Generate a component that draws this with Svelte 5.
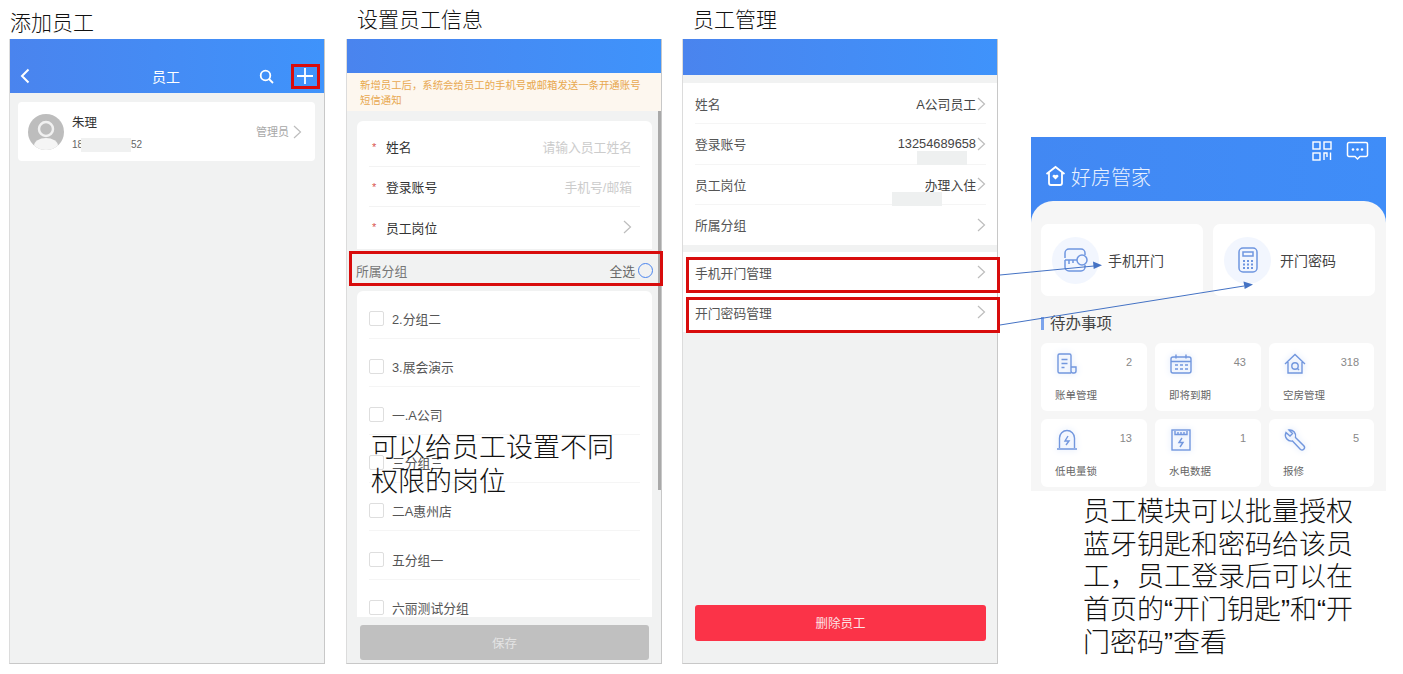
<script>
  const formRows = [
    { label: "姓名", hint: "请输入员工姓名" },
    { label: "登录账号", hint: "手机号/邮箱" },
    { label: "员工岗位", arrow: true }
  ];
  const groups = ["2.分组二", "3.展会演示", "一.A公司", "三分组三", "二A惠州店", "五分组一", "六丽测试分组"];
  const infoRows = [
    { label: "姓名", value: "A公司员工" },
    { label: "登录账号", value: "13254689658" },
    { label: "员工岗位", value: "办理入住" },
    { label: "所属分组", value: "" }
  ];
  const todos = [
    { name: "账单管理", count: 2, icon: "bill" },
    { name: "即将到期", count: 43, icon: "calendar" },
    { name: "空房管理", count: 318, icon: "house" },
    { name: "低电量锁", count: 13, icon: "lock" },
    { name: "水电数据", count: 1, icon: "meter" },
    { name: "报修", count: 5, icon: "wrench" }
  ];
</script>

{#snippet chevron()}
  <svg class="chevron" width="9" height="14" viewBox="0 0 9 14" fill="none">
    <path d="M1 1l6.5 6L1 13" stroke="#bdbdbd" stroke-width="1.2" />
  </svg>
{/snippet}

{#snippet todoIcon(name)}
  <svg class="todo-icon" width="24" height="24" viewBox="0 0 24 24" fill="none" stroke="#7297de" stroke-width="1.4">
    {#if name === "bill"}
      <path d="M16 21H4.500A1.500 1.500 0 0 1 3 19.500V3.500A1.500 1.500 0 0 1 4.500 2h10A1.500 1.500 0 0 1 16 3.500V19a2 2 0 0 0 2 2h1a2 2 0 0 0 2-2v-4h-5" />
      <path d="M6.500 7.500h6M6.500 11.500h6M6.500 15.500h3" />
    {:else if name === "calendar"}
      <rect x="2" y="5" width="20" height="16" rx="2" />
      <path d="M7 2.500v4M17 2.500v4M2 9.500h20M6 13h3M11 13h3M16 13h3M6 17h3M11 17h3M16 17h3" />
    {:else if name === "house"}
      <path d="M2 12l10-9.500L22 12M5 10v11h14V10" />
      <circle cx="12" cy="14" r="3.200" />
      <path d="M14.500 16.500l1.500 1.500" />
    {:else if name === "lock"}
      <path d="M4.500 20V10a7.500 7.500 0 0 1 15 0v10M2 21h20" />
      <path d="M13 8l-3 5h4l-3 4" />
    {:else if name === "meter"}
      <rect x="3" y="2" width="18" height="20" />
      <path d="M6 3v3.500h12V3M9 4v2M12 4v2M15 4v2M13 10l-3 4.500h4L11 19" />
    {:else}
      <path d="M3 4.500l4 3.500 2.500-2.500L6 2a6 6 0 0 1 6.500 7.500l8.500 8.500a2.500 2.500 0 0 1-3.500 3.500L9.500 13A6 6 0 0 1 3 4.500z" />
    {/if}
  </svg>
{/snippet}

<div class="slide">
  <section class="col">
    <h2>添加员工</h2>
    <div class="phone">
      <header class="bar list-bar">
        <svg width="10" height="16" viewBox="0 0 10 16" fill="none"><path d="M8.500 1.500L2 8l6.500 6.500" stroke="#fff" stroke-width="2" /></svg>
        <span class="bar-title">员工</span>
        <svg class="search" width="15" height="15" viewBox="0 0 15 15" fill="none"><circle cx="6.500" cy="6.500" r="4.800" stroke="#fff" stroke-width="1.800" /><path d="M10 10l4 4" stroke="#fff" stroke-width="1.800" /></svg>
        <svg class="plus" width="16" height="16" viewBox="0 0 16 16"><path d="M8 0v16M0 8h16" stroke="#fff" stroke-width="1.800" /></svg>
      </header>
      <div class="staff-card">
        <svg width="36" height="36" viewBox="0 0 36 36">
          <defs><clipPath id="avatar"><circle cx="18" cy="18" r="18" /></clipPath></defs>
          <circle cx="18" cy="18" r="18" fill="#bdbdbd" />
          <g clip-path="url(#avatar)">
            <circle cx="18" cy="15" r="7" fill="none" stroke="#f1f1f1" stroke-width="2.500" />
            <ellipse cx="18" cy="32" rx="12" ry="8" fill="#f5f5f5" />
          </g>
        </svg>
        <div class="staff-info">
          <div class="staff-name">朱理</div>
          <div class="staff-phone"><span class="phone-head">18</span><span class="mask"></span>52</div>
        </div>
        <span class="staff-role">管理员</span>
        {@render chevron()}
      </div>
    </div>
  </section>

  <section class="col">
    <h2 class="indent">设置员工信息</h2>
    <div class="phone">
      <header class="bar short-bar"></header>
      <p class="notice">新增员工后，系统会给员工的手机号或邮箱发送一条开通账号短信通知</p>
      <div class="form-body">
        <div class="scrollbar"></div>
        <div class="form-card">
          {#each formRows as row, i}
            <div class="form-row" class:last={i === formRows.length - 1}>
              <span class="star">*</span>
              <span class="form-label">{row.label}</span>
              {#if row.hint}<span class="hint">{row.hint}</span>{/if}
              {#if row.arrow}{@render chevron()}{/if}
            </div>
          {/each}
        </div>
        <div class="section-row">
          <span>所属分组</span>
          <span class="select-all">全选<i class="radio"></i></span>
        </div>
        <div class="group-card">
          {#each groups as group}
            <div class="group-row">
              <i class="check"></i>
              <span>{group}</span>
            </div>
          {/each}
        </div>
      </div>
      <div class="form-foot"><div class="save">保存</div></div>
    </div>
  </section>

  <section class="col manage-col">
    <h2 class="indent">员工管理</h2>
    <div class="phone">
      <header class="bar detail-bar"></header>
      <div class="info-list">
        {#each infoRows as row, i}
          <div class="info-row" class:last={i === infoRows.length - 1}>
            <span>{row.label}</span>
            <span class="info-value">{row.value}</span>
            {@render chevron()}
            {#if i === 1}<i class="cover cover-a"></i>{/if}
            {#if i === 2}<i class="cover cover-b"></i>{/if}
          </div>
        {/each}
      </div>
      <div class="info-list action-list">
        <div class="info-row last"><span>手机开门管理</span><span class="info-value"></span>{@render chevron()}</div>
        <div class="info-row last"><span>开门密码管理</span><span class="info-value"></span>{@render chevron()}</div>
      </div>
      <div class="delete-wrap"><div class="delete">删除员工</div></div>
    </div>
  </section>

  <section class="col home-col">
    <div class="home">
      <div class="home-icons">
        <svg width="20" height="20" viewBox="0 0 20 20" fill="none" stroke="#fff" stroke-width="1.400">
          <rect x="1" y="1" width="7" height="7" /><rect x="12" y="1" width="7" height="7" /><rect x="1" y="12" width="7" height="7" />
          <path d="M12 19v-7h3v4M18.500 11.500V19" />
        </svg>
        <svg width="23" height="20" viewBox="0 0 23 20" fill="none">
          <path d="M3 1.500h17A1.500 1.500 0 0 1 21.500 3v11a1.500 1.500 0 0 1-1.500 1.500h-6L11.500 18 9 15.500H3A1.500 1.500 0 0 1 1.500 14V3A1.500 1.500 0 0 1 3 1.500z" stroke="#fff" stroke-width="1.500" />
          <circle cx="7" cy="8.500" r="1.300" fill="#fff" /><circle cx="11.500" cy="8.500" r="1.300" fill="#fff" /><circle cx="16" cy="8.500" r="1.300" fill="#fff" />
        </svg>
      </div>
      <div class="brand">
        <svg width="21" height="22" viewBox="0 0 21 22" fill="none">
          <path d="M1.500 9L10.500 2l9 7M4 7.500V18a2 2 0 0 0 2 2h9a2 2 0 0 0 2-2V7.500" stroke="#fff" stroke-width="1.800" />
          <path d="M10.500 14.500l-3-3a1.700 1.700 0 0 1 3-1.200 1.700 1.700 0 0 1 3 1.200z" fill="#fff" />
        </svg>
        <span>好房管家</span>
      </div>
      <div class="sheet">
        <div class="door-cards">
          <div class="door-card">
            <span class="door-icon">
              <svg width="26" height="24" viewBox="0 0 26 24" fill="none" stroke="#6f96e0" stroke-width="1.500">
                <path d="M2 10V5a4 4 0 0 1 4-4h12a4 4 0 0 1 4 4v2M2 12h12M2 12v7a4 4 0 0 0 4 4h12a4 4 0 0 0 4-4v-2" />
                <circle cx="19" cy="12" r="5" />
                <path d="M6 12v4M10 12v3" />
              </svg>
            </span>
            <span>手机开门</span>
          </div>
          <div class="door-card">
            <span class="door-icon">
              <svg width="20" height="26" viewBox="0 0 20 26" fill="none" stroke="#6f96e0" stroke-width="1.500">
                <rect x="1" y="1" width="18" height="24" rx="4" />
                <rect x="5" y="5" width="10" height="4" />
                <path d="M5 14h2M9 14h2M13 14h2M5 17.500h2M9 17.500h2M13 17.500h2M5 21h2M9 21h2M13 21h2" stroke-width="2" />
              </svg>
            </span>
            <span>开门密码</span>
          </div>
        </div>
        <h3 class="todo-title">待办事项</h3>
        <div class="todo-grid">
          {#each todos as todo}
            <div class="todo">
              <div class="todo-top">
                {@render todoIcon(todo.icon)}
                <span class="todo-count">{todo.count}</span>
              </div>
              <div class="todo-name">{todo.name}</div>
            </div>
          {/each}
        </div>
      </div>
    </div>
    <p class="note note-home">员工模块可以批量授权蓝牙钥匙和密码给该员工，员工登录后可以在首页的“开门钥匙”和“开门密码”查看</p>
  </section>

  <!-- annotations drawn over the screenshots -->
  <div class="mark mark-plus"></div>
  <div class="mark mark-group"></div>
  <div class="mark mark-phone"></div>
  <div class="mark mark-code"></div>
  <p class="note note-form">可以给员工设置不同权限的岗位</p>
  <svg class="arrows" width="1403" height="674" viewBox="0 0 1403 674" fill="none">
    <path d="M1000 275L1094 266" stroke="#4472c4" />
    <path d="M1102 265.200l-9-3.700.7 7.500z" fill="#4472c4" />
    <path d="M1000 325L1244 286" stroke="#4472c4" />
    <path d="M1253 284.500l-9.500-3 1.200 7.500z" fill="#4472c4" />
  </svg>
</div>

<style>
  :global(body) {
    margin: 0;
    background: #fff;
  }

  .slide {
    position: relative;
    display: flex;
    gap: 21px;
    width: 1403px;
    height: 674px;
    padding-left: 9px;
    box-sizing: border-box;
    overflow: hidden;
    font-family: "Liberation Sans", "Noto Sans CJK SC", sans-serif;
    color: #333;
  }

  .col {
    display: flex;
    flex-direction: column;
    width: 316px;
  }

  .manage-col {
    margin-left: -1px;
  }

  h2 {
    height: 39px;
    margin: 0;
    padding: 9px 0 0 1px;
    box-sizing: border-box;
    font-size: 21px;
    line-height: 28px;
    font-weight: 300;
    color: #111;
  }

  h2.indent {
    padding-left: 11px;
    margin-top: -3px;
    height: 42px;
  }

  .phone {
    display: flex;
    flex-direction: column;
    height: 625px;
    box-sizing: border-box;
    background: #f1f2f2;
    border-right: 1px solid #c8c8c8;
    border-bottom: 1px solid #c8c8c8;
    border-left: 1px solid #dcdcdc;
  }

  .bar {
    flex: none;
    background: linear-gradient(90deg, #4a84ee, #3f93fb);
  }

  .list-bar {
    display: flex;
    align-items: center;
    height: 54px;
    padding: 20px 0 0 10px;
    box-sizing: border-box;
    color: #fff;
  }

  .list-bar svg {
    flex: none;
  }

  .bar-title {
    flex: none;
    margin-left: 122px;
    font-size: 14px;
    width: 70px;
  }

  .search {
    margin-left: 37px;
  }

  .plus {
    margin-left: 23px;
  }

  .staff-card {
    display: flex;
    align-items: center;
    margin: 9px 9px 0 8px;
    height: 59px;
    padding: 0 13px 0 10px;
    background: #fff;
    border-radius: 4px;
  }

  .staff-info {
    flex: 1;
    margin: 2px 0 0 8px;
  }

  .staff-name {
    font-size: 12.500px;
    line-height: 18px;
    margin-bottom: 6px;
  }

  .staff-phone {
    display: flex;
    font-size: 10px;
    line-height: 14px;
    color: #666;
  }

  .phone-head {
    width: 9px;
    overflow: hidden;
  }

  .mask {
    width: 50px;
    height: 14px;
    background: #f0f1f1;
  }

  .staff-role {
    margin: -2px 4px 0 0;
    font-size: 11px;
    color: #a8a8a8;
  }

  .short-bar {
    height: 34px;
  }

  .notice {
    flex: none;
    margin: 0;
    padding: 5px 12px 0 13px;
    height: 38px;
    box-sizing: border-box;
    background: #fdf7ef;
    color: #e8a850;
    font-size: 10.400px;
    line-height: 15px;
  }

  .form-body {
    position: relative;
    flex: 1;
    min-height: 0;
    overflow: hidden;
    padding: 10px 9px 0 10px;
  }

  .scrollbar {
    position: absolute;
    top: 0;
    right: 0;
    width: 3px;
    height: 379px;
    background: #a9a9a9;
  }

  .form-card {
    padding: 6px 12px 0;
    height: 128px;
    box-sizing: border-box;
    background: #fff;
    border-radius: 6px 6px 0 0;
  }

  .form-row {
    display: flex;
    align-items: center;
    height: 40px;
    box-sizing: border-box;
    border-bottom: 1px solid #f3f3f3;
    font-size: 12.800px;
  }

  .form-row.last {
    border-bottom: 0;
  }

  .star {
    width: 17px;
    padding-left: 3px;
    box-sizing: border-box;
    color: #d9534f;
    font-size: 11px;
  }

  .form-label {
    flex: 1;
  }

  .hint {
    margin-right: 8px;
    color: #ccc;
  }

  .form-row .chevron {
    margin-right: 8px;
  }

  .section-row {
    display: flex;
    justify-content: space-between;
    align-items: center;
    margin: 0 -1px;
    height: 42px;
    font-size: 12.800px;
    color: #777;
  }

  .select-all {
    display: flex;
    align-items: center;
    gap: 3px;
    color: #666;
  }

  .radio {
    width: 13px;
    height: 13px;
    border: 1px solid #4a84ee;
    border-radius: 50%;
  }

  .group-card {
    height: 400px;
    padding: 0 12px;
    background: #fff;
    border-radius: 6px 6px 0 0;
  }

  .group-row {
    display: flex;
    align-items: center;
    gap: 8px;
    height: 48.100px;
    padding-top: 8px;
    box-sizing: border-box;
    border-bottom: 1px solid #f5f5f5;
    font-size: 12.800px;
    color: #555;
  }

  .check {
    width: 13px;
    height: 13px;
    border: 1px solid #dedede;
    border-radius: 2px;
  }

  .form-foot {
    flex: none;
    height: 46px;
    padding: 8px 12px 0 13px;
    box-sizing: border-box;
  }

  .save {
    height: 35px;
    line-height: 39px;
    text-align: center;
    background: #c0c0c0;
    border-radius: 3px;
    color: #e4e4e4;
    font-size: 12.500px;
  }

  .detail-bar {
    height: 36px;
  }

  .info-list {
    flex: none;
    margin-top: 8px;
    padding: 1px 11px 0 12px;
    background: #fff;
  }

  .action-list {
    margin-top: 7px;
    padding-top: 0;
  }

  .info-row {
    position: relative;
    display: flex;
    align-items: center;
    height: 40.250px;
    box-sizing: border-box;
    border-bottom: 1px solid #f5f5f5;
    font-size: 12.800px;
    color: #555;
  }

  .info-row.last {
    border-bottom: 0;
  }

  .action-list .info-row {
    height: 40px;
  }

  .info-value {
    flex: 1;
    margin-right: 1px;
    text-align: right;
    color: #444;
  }

  .cover {
    position: absolute;
    width: 50px;
    height: 14px;
    background: #eef0f0;
  }

  .cover-a {
    top: 27px;
    left: 222px;
  }

  .cover-b {
    top: 27px;
    left: 197px;
  }

  .delete-wrap {
    flex: 1;
    display: flex;
    align-items: flex-end;
    padding: 0 11px 22px 12px;
  }

  .delete {
    flex: 1;
    height: 36px;
    line-height: 39px;
    text-align: center;
    background: #fb3348;
    border-radius: 3px;
    color: #fde4e6;
    font-size: 12.500px;
  }

  .home-col {
    width: 355px;
    margin-left: 12px;
    padding-top: 137px;
  }

  .home {
    position: relative;
    height: 354px;
    overflow: hidden;
    background: linear-gradient(90deg, #4288f3, #3f8df8);
  }

  .home-icons {
    display: flex;
    justify-content: flex-end;
    gap: 14px;
    height: 20px;
    padding: 4px 17px 0 0;
  }

  .brand {
    display: flex;
    align-items: center;
    gap: 5px;
    height: 24px;
    margin: 3px 0 0 14px;
    color: #eaf2ff;
    font-size: 20px;
    font-weight: 300;
  }

  .sheet {
    height: 290px;
    margin-top: 13px;
    padding: 23px 11px 0 10px;
    box-sizing: border-box;
    background: #f6f6f6;
    border-radius: 22px 22px 0 0;
  }

  .door-cards {
    display: grid;
    grid-template-columns: 162px 162px;
    gap: 10px;
  }

  .door-card {
    display: flex;
    align-items: center;
    gap: 9px;
    height: 72px;
    padding-left: 11px;
    background: #fff;
    border-radius: 7px;
    font-size: 14px;
    color: #444;
  }

  .door-icon {
    display: flex;
    align-items: center;
    justify-content: center;
    width: 47px;
    height: 47px;
    background: #f2f6fe;
    border-radius: 50%;
  }

  .todo-title {
    margin: 18px 0 9px;
    padding-left: 9px;
    height: 20px;
    font-size: 15.500px;
    line-height: 20px;
    font-weight: 400;
    color: #444;
    background: linear-gradient(#7ba3ec, #7ba3ec) 0 3px / 3px 13px no-repeat;
  }

  .todo-grid {
    display: grid;
    grid-template-columns: 106px 106px 105px;
    grid-auto-rows: 68px;
    column-gap: 8px;
    row-gap: 8px;
  }

  .todo {
    padding: 8px 15px 0 14px;
    background: #fff;
    border-radius: 6px;
  }

  .todo-top {
    display: flex;
    justify-content: space-between;
    height: 28px;
    padding-top: 1px;
  }

  .todo-icon {
    filter: drop-shadow(0 0 3px #c9daf9);
  }

  .todo-count {
    font-size: 11px;
    line-height: 21px;
    color: #888;
  }

  .todo-name {
    margin-top: 8px;
    font-size: 10.500px;
    line-height: 14px;
    color: #666;
  }

  .note {
    margin: 0;
    font-size: 27px;
    line-height: 33px;
    font-weight: 300;
    color: #111;
  }

  .note-home {
    margin: 5px 0 0 52px;
    width: 274px;
    line-height: 32.700px;
  }

  .note-form {
    position: absolute;
    left: 371px;
    top: 431px;
    width: 250px;
    line-height: 34px;
  }

  .mark {
    position: absolute;
    box-sizing: border-box;
    border: 3px solid #d80c0c;
  }

  .mark-plus {
    left: 291px;
    top: 64px;
    width: 29px;
    height: 25px;
  }

  .mark-group {
    left: 349px;
    top: 251px;
    width: 314px;
    height: 35px;
  }

  .mark-phone {
    left: 686px;
    top: 257px;
    width: 314px;
    height: 36px;
  }

  .mark-code {
    left: 686px;
    top: 297px;
    width: 314px;
    height: 36px;
  }

  .arrows {
    position: absolute;
    left: 0;
    top: 0;
    pointer-events: none;
  }
</style>
